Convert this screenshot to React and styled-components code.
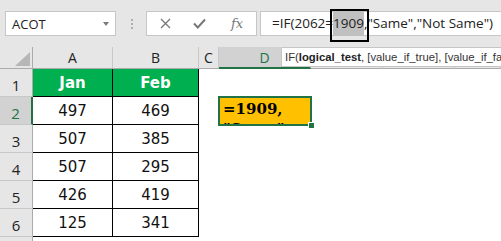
import styled, { createGlobalStyle } from "styled-components";

const GlobalStyle = createGlobalStyle`
  body {
    margin: 0;
    overflow: hidden;
    background: #ffffff;
    font-family: "Open Sans", "Liberation Sans", sans-serif;
  }
`;

const green = "#217346";

const Page = styled.div`
  position: relative;
  width: 501px;
  height: 241px;
  overflow: hidden;
`;

const TopBar = styled.div`
  display: flex;
  align-items: flex-start;
  height: 47px;
  box-sizing: border-box;
  padding: 11px 0 0 5px;
  background: #e6e6e6;
`;

const NameBox = styled.div`
  position: relative;
  display: flex;
  align-items: center;
  width: 111px;
  height: 25px;
  box-sizing: border-box;
  padding-left: 6px;
  background: #fff;
  border: 1px solid #c6c6c6;
  font-size: 13px;
  color: #222;

  &::after {
    content: "";
    position: absolute;
    right: 6px;
    top: 10px;
    border-left: 3.5px solid transparent;
    border-right: 3.5px solid transparent;
    border-top: 4px solid #7a7a7a;
  }
`;

const Grip = styled.div`
  display: flex;
  flex-direction: column;
  gap: 2px;
  margin: 8px 13px 0 15px;

  span {
    width: 2px;
    height: 2px;
    background: #b0b0b0;
  }
`;

const IconBox = styled.div`
  display: flex;
  align-items: center;
  width: 111px;
  height: 25px;
  box-sizing: border-box;
  background: #fff;
  border: 1px solid #c6c6c6;
  padding-left: 13px;
  gap: 22px;
  color: #777;
`;

const Fx = styled.span`
  font-family: "DejaVu Serif", serif;
  font-style: italic;
  font-size: 13px;
  color: #777;
  margin-left: 3px;
`;

const FormulaInput = styled.div`
  flex: 1;
  height: 25px;
  box-sizing: border-box;
  margin-left: 3px;
  padding-left: 11px;
  background: #fff;
  border: 1px solid #c6c6c6;
  border-right: none;
  font-size: 13.5px;
  line-height: 23px;
  color: #222;
  white-space: nowrap;
`;

const Highlight = styled.span`
  position: relative;
  background: #c0c0c0;
  padding: 3px 0 4px;

  &::after {
    content: "";
    position: absolute;
    left: -3px;
    right: -5px;
    top: -2px;
    bottom: -6px;
    border: 2px solid #000;
  }
`;

const Sheet = styled.div`
  display: grid;
  grid-template-columns: 33px 80px 86px 20px 92px 72px 72px 1fr;
  grid-template-rows: 22px;
  grid-auto-rows: 28px;
  background: #fff;
`;

const Corner = styled.div`
  position: relative;
  background: #e6e6e6;
  border-right: 1px solid #ababab;
  border-bottom: 1px solid #ababab;

  &::after {
    content: "";
    position: absolute;
    right: 2px;
    bottom: 2px;
    width: 15px;
    height: 14px;
    background: #b7b7b7;
    clip-path: polygon(100% 0, 100% 100%, 0 100%);
  }
`;

const ColHead = styled.div`
  display: flex;
  align-items: center;
  justify-content: center;
  box-sizing: border-box;
  background: ${(p) => (p.$active ? "#d2d2d2" : "#e6e6e6")};
  border-right: 1px solid #c8c8c8;
  border-bottom: ${(p) => (p.$active ? `2px solid ${green}` : "1px solid #ababab")};
  font-size: 14px;
  color: ${(p) => (p.$active ? green : "#222")};
`;

const RowHead = styled.div`
  display: flex;
  align-items: flex-end;
  justify-content: center;
  box-sizing: border-box;
  padding-bottom: 1px;
  background: ${(p) => (p.$active ? "#d2d2d2" : "#e6e6e6")};
  border-bottom: 1px solid #c8c8c8;
  border-right: ${(p) => (p.$active ? `2px solid ${green}` : "1px solid #ababab")};
  font-size: 15px;
  color: ${(p) => (p.$active ? green : "#222")};
`;

const DataCell = styled.div`
  display: flex;
  align-items: center;
  justify-content: center;
  box-sizing: border-box;
  border-right: 1px solid #000;
  border-bottom: 1px solid #000;
  background: ${(p) => (p.$head ? "#00b050" : "#fff")};
  color: ${(p) => (p.$head ? "#fff" : "#111")};
  font-family: "DejaVu Sans", sans-serif;
  font-size: 15px;
  font-weight: ${(p) => (p.$head ? 700 : 400)};
`;

const Blank = styled.div`
  background: #fff;
`;

const ActiveCell = styled.div`
  position: relative;
  background: #ffc000;
  outline: 2px solid ${green};
  outline-offset: -1px;
  z-index: 1;
`;

const CellText = styled.div`
  height: 100%;
  overflow: hidden;
  padding: 2px 0 0 4px;
  box-sizing: border-box;
  font-family: "DejaVu Serif", serif;
  font-weight: 700;
  font-size: 15px;
  line-height: 20px;
  color: #000;
`;

const FillHandle = styled.span`
  position: absolute;
  right: -3px;
  bottom: -3px;
  width: 5px;
  height: 5px;
  background: ${green};
  border-top: 1px solid #fff;
  border-left: 1px solid #fff;
`;

const Tooltip = styled.div`
  position: absolute;
  left: 281px;
  top: 47px;
  width: 240px;
  height: 20px;
  box-sizing: border-box;
  padding-left: 3px;
  background: #fff;
  border: 1px solid #c6c6c6;
  border-right: none;
  font-family: "Liberation Sans", Arial, sans-serif;
  font-size: 11.3px;
  line-height: 18px;
  color: #333;
  white-space: nowrap;
  overflow: hidden;

  b {
    font-weight: 700;
    color: #222;
  }
`;

const columns = ["A", "B", "C", "D", "", "", ""];
const rows = [
  ["Jan", "Feb"],
  ["497", "469"],
  ["507", "385"],
  ["507", "295"],
  ["426", "419"],
  ["125", "341"],
  null,
];

const CrossIcon = () => (
  <svg width="11" height="11" viewBox="0 0 11 11">
    <path d="M1 1 L10 10 M10 1 L1 10" stroke="#777" strokeWidth="1.3" fill="none" />
  </svg>
);

const CheckIcon = () => (
  <svg width="13" height="11" viewBox="0 0 13 11">
    <path d="M1 5.5 L4.8 9.5 L12 1.5" stroke="#777" strokeWidth="2" fill="none" />
  </svg>
);

const App = () => {
  return (
    <Page>
      <GlobalStyle />
      <TopBar>
        <NameBox>ACOT</NameBox>
        <Grip>
          <span />
          <span />
          <span />
        </Grip>
        <IconBox>
          <CrossIcon />
          <CheckIcon />
          <Fx>fx</Fx>
        </IconBox>
        <FormulaInput>
          =IF(2062=<Highlight>1909</Highlight>,"Same","Not Same")
        </FormulaInput>
      </TopBar>

      <Sheet>
        <Corner />
        {columns.map((c, i) => (
          <ColHead key={i} $active={c === "D"}>
            {c}
          </ColHead>
        ))}

        {rows.map((r, i) => (
          <>
            <RowHead key={`h${i}`} $active={i === 1}>
              {r ? i + 1 : ""}
            </RowHead>
            {r ? (
              <>
                <DataCell $head={i === 0}>{r[0]}</DataCell>
                <DataCell $head={i === 0}>{r[1]}</DataCell>
              </>
            ) : (
              <>
                <Blank />
                <Blank />
              </>
            )}
            <Blank />
            {i === 1 ? (
              <ActiveCell>
                <CellText>=1909, "Same", "Not Same"</CellText>
                <FillHandle />
              </ActiveCell>
            ) : (
              <Blank />
            )}
            <Blank />
            <Blank />
            <Blank />
          </>
        ))}
      </Sheet>

      <Tooltip>
        IF(<b>logical_test</b>, [value_if_true], [value_if_false])
      </Tooltip>
    </Page>
  );
};

export default App;
